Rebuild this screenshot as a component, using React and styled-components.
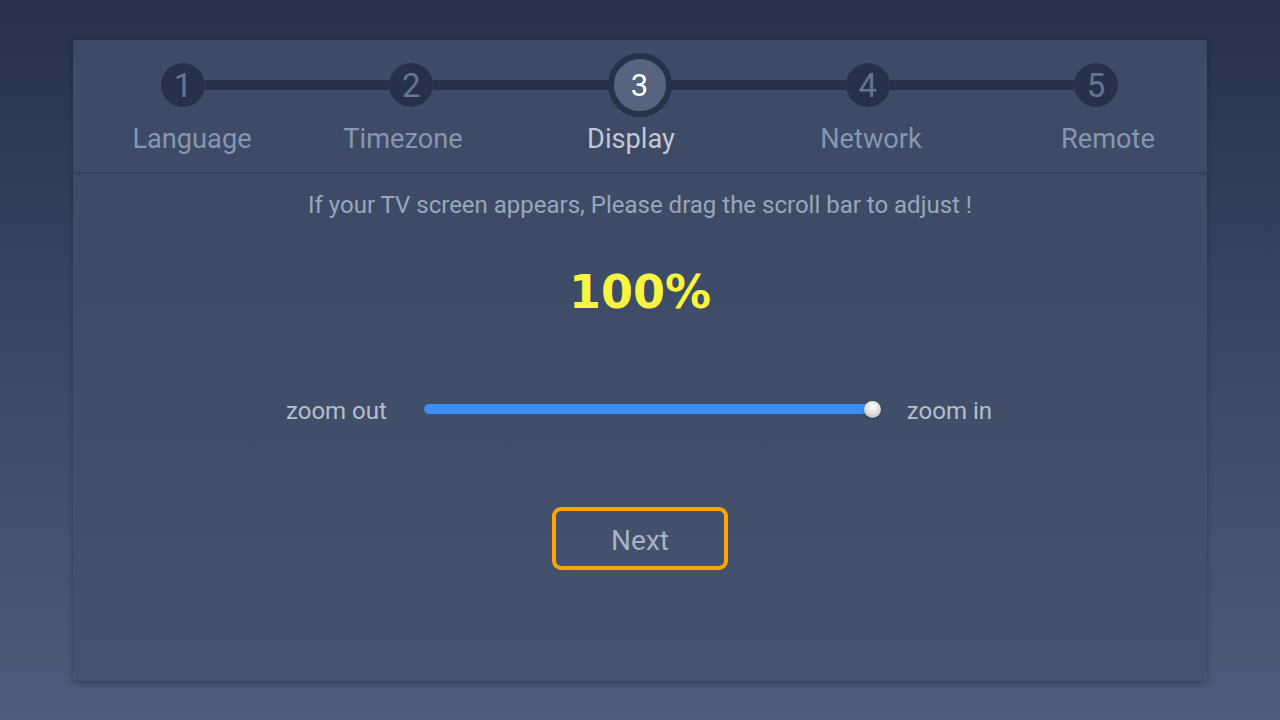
import React from "react";
import styled, { createGlobalStyle } from "styled-components";

const GlobalStyle = createGlobalStyle`
  html, body {
    margin: 0;
    padding: 0;
  }
  body {
    width: 1280px;
    height: 720px;
    overflow: hidden;
    background: linear-gradient(180deg, #28324a 0%, #3a4663 45%, #4f5c7d 100%);
    font-family: Roboto, "Noto Sans", "Liberation Sans", sans-serif;
  }
`;

const Page = styled.div`
  display: flex;
  justify-content: center;
  padding-top: 40px;
`;

const Panel = styled.section`
  width: 1134px;
  height: 641px;
  border-radius: 4px;
  background: linear-gradient(180deg, #3d4a65 0%, #3f4c68 40%, #45536f 100%);
  box-shadow: 0 2px 6px rgba(20, 26, 40, 0.45);
  display: flex;
  flex-direction: column;
  overflow: hidden;
`;

const Header = styled.header`
  height: 133px;
  box-sizing: border-box;
  padding-top: 13px;
  background: #3e4b67;
  border-bottom: 1px solid #37435c;
  box-shadow: 0 1px 2px rgba(30, 38, 56, 0.35);
`;

const Track = styled.div`
  display: flex;
  align-items: center;
  height: 64px;
  margin: 0 89px 0 88px;
`;

const Connector = styled.div`
  flex: 1;
  height: 10px;
  background: #27324a;
`;

const Circle = styled.div`
  position: relative;
  z-index: 1;
  flex: none;
  display: flex;
  align-items: center;
  justify-content: center;
  box-sizing: border-box;
  width: ${(p) => (p.$active ? 64 : 44)}px;
  height: ${(p) => (p.$active ? 64 : 44)}px;
  margin: 0 ${(p) => (p.$active ? -10 : 0)}px;
  border-radius: 50%;
  background: ${(p) => (p.$active ? "#56647f" : "#27324a")};
  border: ${(p) => (p.$active ? "6px solid #27324a" : "none")};
  color: ${(p) => (p.$active ? "#ffffff" : "#66748d")};
  font-size: ${(p) => (p.$active ? 31 : 33)}px;
  line-height: 1;
`;

const Labels = styled.div`
  display: flex;
  justify-content: center;
  margin-top: 7px;
`;

const Label = styled.div`
  width: 228px;
  flex: none;
  text-align: center;
  font-size: 27.2px;
  line-height: 30px;
  color: ${(p) => (p.$active ? "#c3c8d2" : "#8696ae")};
  transform: translateX(${(p) => p.$shift}px);
`;

const Body = styled.div`
  display: flex;
  flex-direction: column;
  align-items: center;
`;

const Hint = styled.p`
  margin: 18px 0 0;
  font-size: 24px;
  line-height: 28px;
  color: #9aa6ba;
`;

const Percent = styled.div`
  margin-top: 45px;
  font-family: "DejaVu Sans", "Liberation Sans", sans-serif;
  font-weight: 700;
  font-size: 46px;
  line-height: 56px;
  color: #f7f540;
`;

const SliderRow = styled.div`
  display: flex;
  align-items: center;
  height: 30px;
  margin-top: 74px;
  transform: translateX(-1px);
`;

const ZoomText = styled.span`
  font-size: 24px;
  line-height: 30px;
  color: #b7bdc9;
  transform: translateY(2px);
`;

const Bar = styled.div`
  position: relative;
  width: 454px;
  height: 10px;
  margin: 0 29px 0 37px;
  border-radius: 5px 0 0 5px;
  background: #3d8ef2;
`;

const Thumb = styled.div`
  position: absolute;
  right: -3px;
  top: 50%;
  width: 17px;
  height: 17px;
  margin-top: -8.5px;
  border-radius: 50%;
  background: radial-gradient(circle at 50% 35%, #ffffff 0%, #e2e2e2 45%, #a9abaf 100%);
  box-shadow: 0 1px 2px rgba(0, 0, 0, 0.35);
`;

const NextButton = styled.button`
  margin-top: 83px;
  width: 176px;
  height: 63px;
  box-sizing: border-box;
  border: 4px solid #ffa400;
  border-radius: 9px;
  background: transparent;
  font-family: Roboto, "Noto Sans", sans-serif;
  font-size: 28px;
  color: #a8b1c0;
  padding: 3px 0 0;
`;

const steps = [
  { n: 1, label: "Language", shift: 8 },
  { n: 2, label: "Timezone", shift: -9 },
  { n: 3, label: "Display", shift: -9, active: true },
  { n: 4, label: "Network", shift: 3 },
  { n: 5, label: "Remote", shift: 12 },
];

export default function App() {
  return (
    <>
      <GlobalStyle />
      <Page>
        <Panel>
          <Header>
            <Track>
              {steps.map((s, i) => (
                <React.Fragment key={s.n}>
                  {i > 0 && <Connector />}
                  <Circle $active={s.active}>{s.n}</Circle>
                </React.Fragment>
              ))}
            </Track>
            <Labels>
              {steps.map((s) => (
                <Label key={s.n} $active={s.active} $shift={s.shift}>
                  {s.label}
                </Label>
              ))}
            </Labels>
          </Header>
          <Body>
            <Hint>If your TV screen appears, Please drag the scroll bar to adjust !</Hint>
            <Percent>100%</Percent>
            <SliderRow>
              <ZoomText>zoom out</ZoomText>
              <Bar>
                <Thumb />
              </Bar>
              <ZoomText>zoom in</ZoomText>
            </SliderRow>
            <NextButton>Next</NextButton>
          </Body>
        </Panel>
      </Page>
    </>
  );
}
